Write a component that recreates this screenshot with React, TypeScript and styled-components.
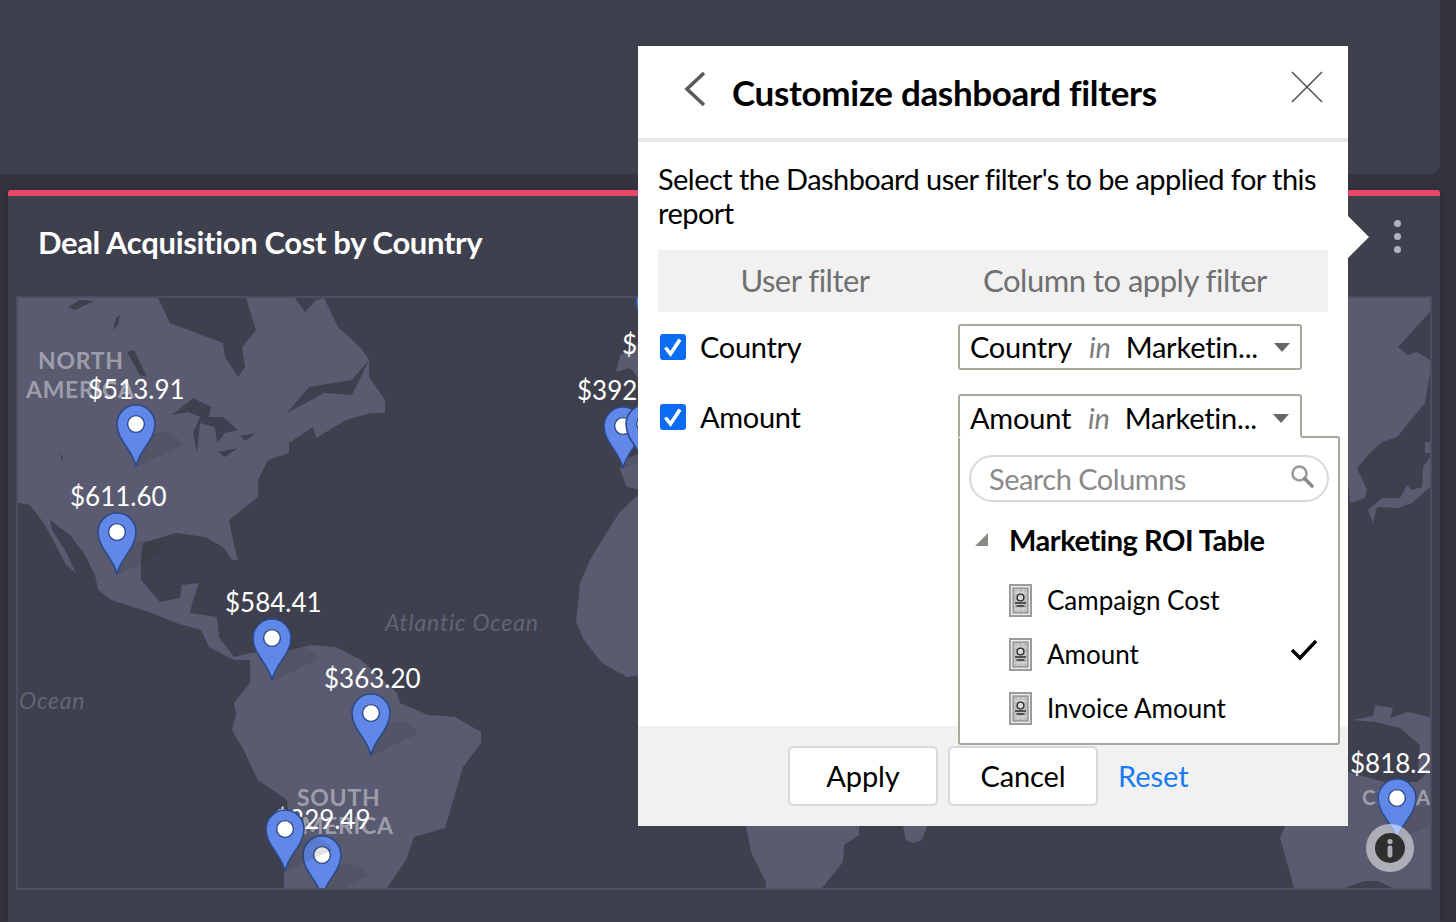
import * as React from "react";
import styled, { createGlobalStyle } from "styled-components";

const GlobalStyle = createGlobalStyle`
  html, body {
    margin: 0;
    padding: 0;
    background: #333440;
    font-family: "Lato", "Liberation Sans", sans-serif;
  }
`;

const Page = styled.div`
  position: relative;
  width: 1456px;
  height: 922px;
  overflow: hidden;
  display: flex;
  flex-direction: column;
  gap: 16px;
`;

const TopCard = styled.div`
  flex: none;
  width: 1440px;
  height: 174px;
  background: #3e404d;
  border-bottom-right-radius: 10px;
`;

const Widget = styled.section`
  flex: 1;
  margin: 0 16px 0 8px;
  background: #3e404d;
  border-top: 6px solid #e8476a;
  border-top-right-radius: 3px;
  border-top-left-radius: 3px;
  padding: 0 8px;
  box-shadow: 0 0 8px rgba(0, 0, 0, 0.18);
`;

const WidgetHeader = styled.header`
  height: 100px;
  display: flex;
  align-items: center;
  justify-content: space-between;
  padding: 0 31px 18px 22px;
  box-sizing: border-box;
`;

const WidgetTitle = styled.h2`
  margin: 10px 0 0;
  font-size: 31px;
  font-weight: 700;
  letter-spacing: -0.35px;
  color: #fff;
`;

const Kebab = styled.div`
  display: flex;
  flex-direction: column;
  gap: 6px;
  margin-top: -2px;
`;

const KebabDot = styled.span`
  width: 7px;
  height: 7px;
  border-radius: 50%;
  background: #b0b1bc;
`;

const MapBox = styled.div`
  position: relative;
  box-sizing: border-box;
  height: 594px;
  border: 2px solid #4b4d60;
  overflow: hidden;
  background: #3e404d;
`;

const LandSvg = styled.svg`
  position: absolute;
  inset: 0;
  display: block;
`;

const Region = styled.span<{ $x: number; $y: number; $size?: number }>`
  position: absolute;
  left: ${(p) => p.$x}px;
  top: ${(p) => p.$y}px;
  font-size: ${(p) => p.$size ?? 23}px;
  line-height: 28px;
  font-weight: 700;
  letter-spacing: 0.7px;
  color: rgba(255, 255, 255, 0.42);
  white-space: nowrap;
`;

const Sea = styled.span<{ $x: number; $y: number }>`
  position: absolute;
  left: ${(p) => p.$x}px;
  top: ${(p) => p.$y}px;
  font-size: 23px;
  line-height: 28px;
  font-style: italic;
  letter-spacing: 0.8px;
  color: #636473;
  white-space: nowrap;
`;

const Amount = styled.span<{ $x: number; $y: number }>`
  position: absolute;
  left: ${(p) => p.$x}px;
  top: ${(p) => p.$y}px;
  font-size: 26px;
  line-height: 32px;
  color: #fff;
  white-space: nowrap;
`;

const PinSvg = styled.svg<{ $x: number; $y: number }>`
  position: absolute;
  left: ${(p) => p.$x - 20}px;
  top: ${(p) => p.$y}px;
  overflow: visible;
`;

const InfoBadge = styled.div`
  position: absolute;
  left: 1348px;
  top: 526px;
  width: 48px;
  height: 48px;
  border-radius: 50%;
  background: rgba(255, 255, 255, 0.51);
  display: flex;
  align-items: center;
  justify-content: center;
`;

const Modal = styled.div`
  position: absolute;
  left: 638px;
  top: 46px;
  width: 710px;
  height: 780px;
  background: #fff;
  display: flex;
  flex-direction: column;

  &::after {
    content: "";
    position: absolute;
    left: 100%;
    top: 170px;
    border-left: 21px solid #fff;
    border-top: 21px solid transparent;
    border-bottom: 21px solid transparent;
  }
`;

const ModalHeader = styled.header`
  flex: none;
  height: 96px;
  box-sizing: border-box;
  border-bottom: 4px solid #e8e8e8;
  display: flex;
  align-items: center;
  padding: 0 25px 0 45px;
`;

const ModalTitle = styled.h1`
  flex: 1;
  margin: 0 0 0 25px;
  font-size: 35px;
  font-weight: 700;
  letter-spacing: -0.33px;
  color: #000;
`;

const HeaderIcon = styled.svg<{ $lift: number }>`
  display: block;
  flex: none;
  margin-bottom: ${(p) => p.$lift}px;
`;

const ModalBody = styled.div`
  flex: 1;
  padding: 20px 20px 0;
  display: flex;
  flex-direction: column;
`;

const Intro = styled.p`
  margin: 0;
  font-size: 29px;
  line-height: 34px;
  color: #000;
  letter-spacing: -0.55px;
`;

const TableHead = styled.div`
  margin-top: 20px;
  height: 62px;
  box-sizing: border-box;
  padding-bottom: 2px;
  background: #f1f1f1;
  display: grid;
  grid-template-columns: 294px 346px;
  align-items: center;
  text-align: center;
  font-size: 31px;
  color: #707070;
  letter-spacing: -0.5px;
`;

const FilterRows = styled.div`
  position: relative;
  display: flex;
  flex-direction: column;
  gap: 24px;
  padding-top: 12px;
`;

const FilterRow = styled.div`
  height: 46px;
  display: grid;
  grid-template-columns: 300px 344px;
  align-items: center;
`;

const CheckLabel = styled.label`
  display: flex;
  align-items: center;
  gap: 14px;
  padding-left: 2px;
  font-size: 29px;
  color: #000;
  letter-spacing: -0.3px;
`;

const CheckBox = styled.span`
  width: 26px;
  height: 26px;
  border-radius: 3px;
  background: #0a6cf0;
  display: flex;
  align-items: center;
  justify-content: center;
`;

const CheckText = styled.span`
  margin-bottom: 2px;
`;

const Select = styled.div<{ $open?: boolean }>`
  position: relative;
  z-index: 2;
  box-sizing: border-box;
  height: ${(p) => (p.$open ? "44px" : "46px")};
  align-self: start;
  display: flex;
  align-items: center;
  gap: 17px;
  padding: ${(p) => (p.$open ? "2px 12px 0 10px" : "0 12px 2px 10px")};
  background: #fff;
  border: 2px solid #a8a89c;
  border-bottom: ${(p) => (p.$open ? "2px solid #fff" : "2px solid #a8a89c")};
  border-radius: ${(p) => (p.$open ? "3px 3px 0 0" : "3px")};
  font-size: 29px;
  color: #000;
  letter-spacing: -0.22px;
  white-space: nowrap;
`;

const InWord = styled.em`
  color: #7d7d7d;
  margin-right: -2px;
`;

const Caret = styled.span`
  margin: 2px 0 0 auto;
  border-top: 9px solid #666;
  border-left: 8px solid transparent;
  border-right: 8px solid transparent;
  position: relative;
  left: -1px;
`;

const Dropdown = styled.div`
  position: absolute;
  z-index: 1;
  left: 300px;
  top: 124px;
  width: 382px;
  height: 309px;
  box-sizing: border-box;
  padding: 17px 9px 0;
  background: #fff;
  border: 2px solid #a8a89c;
  border-radius: 3px;
`;

const SearchBox = styled.div`
  height: 47px;
  box-sizing: border-box;
  border: 2px solid #d8d8d8;
  border-radius: 24px;
  display: flex;
  align-items: center;
  justify-content: space-between;
  padding: 0 13px 0 18px;
  font-size: 29px;
  letter-spacing: -0.5px;
  color: #8a8a8a;
`;

const SearchIcon = styled.svg`
  margin-top: -6px;
`;

const TreeHead = styled.div`
  display: flex;
  align-items: center;
  height: 34px;
  margin: 20px 0 17px;
  font-size: 29px;
  font-weight: 700;
  color: #000;
  letter-spacing: -0.45px;
`;

const TreeToggle = styled.span`
  width: 0;
  height: 0;
  margin: 0 21px 0 6px;
  border-bottom: 13px solid #8c8c84;
  border-left: 13px solid transparent;
`;

const ColumnItem = styled.div`
  height: 54px;
  display: flex;
  align-items: center;
  gap: 15px;
  padding: 0 11px 0 40px;
  font-size: 26px;
  color: #000;
`;

const ColumnName = styled.span`
  flex: 1;
`;

const SelectedMark = styled.svg`
  margin-bottom: 9px;
`;

const ModalFooter = styled.footer`
  flex: none;
  height: 100px;
  box-sizing: border-box;
  background: #f1f1f1;
  display: flex;
  align-items: center;
  gap: 10px;
  padding: 0 0 0 150px;
`;

const FooterButton = styled.button`
  width: 150px;
  height: 60px;
  padding: 0 0 2px;
  background: #fff;
  border: 2px solid #d8d8d8;
  border-radius: 6px;
  font: inherit;
  font-size: 29px;
  letter-spacing: -0.1px;
  color: #000;
`;

const ResetLink = styled.a`
  margin: 0 0 2px 10px;
  font-size: 29px;
  color: #1a7cf5;
`;

const LAND: string[] = [
  // north and central america
  "18,298 158,298 170,323 223,343 225,357 238,377 245,367 242,347 256,330 246,298 295,298 305,312 316,300 324,298 338,327 361,348 369,360 369,377 385,400 385,413 371,413 346,420 316,438 313,427 289,443 289,453 268,460 258,480 258,497 229,520 234,545 238,560 232,560 223,547 205,537 176,533 143,543 141,560 141,580 160,602 180,598 182,585 199,583 193,600 190,613 217,617 219,637 234,657 250,653 262,655 250,660 234,660 209,647 201,630 176,623 152,613 111,600 98,590 95,575 85,555 70,535 50,520 52,530 65,550 76,573 66,565 60,553 45,525 30,505 18,503",
  // south america
  "250,653 290,650 311,645 336,647 361,660 397,693 400,703 428,715 455,717 481,732 481,743 463,767 445,828 414,837 406,860 387,888 284,888 284,873 290,830 287,800 258,780 242,747 232,730 236,715 234,703 250,683 250,660",
  // europe
  "616,372 620,355 635,347 640,340 640,380 630,368",
  "620,470 623,460 640,453 640,490 627,487",
  // africa
  "640,493 619,513 594,553 590,560 580,583 576,622 584,640 602,663 627,677 640,675",
  "746,826 859,826 859,835 844,845 843,862 822,888 766,888 766,882 751,852",
  "903,826 927,826 922,840 913,843 906,840",
  // asia
  "1340,298 1430,298 1430,312 1398,347 1408,355 1417,352 1430,360 1430,373 1425,403 1397,437 1382,442 1370,453 1357,468 1367,490 1365,498 1350,503 1348,480 1340,480",
  "1425,442 1430,442 1430,453 1425,453",
  "1430,457 1423,467 1422,487 1412,490 1407,485 1400,498 1382,498 1368,510 1373,523 1377,507 1398,508 1412,503 1430,487",
  "1375,705 1393,708 1390,718 1408,712 1430,717 1430,775 1418,770 1420,745 1400,728 1375,722 1352,720 1373,716",
  // oceania
  "1285,826 1340,800 1348,772 1385,782 1417,782 1430,770 1430,888 1392,888 1378,881 1365,881 1344,888 1294,888 1283,848 1280,838",
];

const WATER: string[] = [
  "68,307 80,300 94,301 75,310",
  "113,330 116,318 120,315 118,325",
  "127,352 134,350 147,377 140,375",
  "172,415 193,398 211,407 209,417 223,417 238,430 225,433 217,443 215,427 200,423 197,453 193,433 200,417 188,412",
  "218,452 238,448 225,457",
  "240,436 256,433 245,441",
  "287,413 309,387 352,380 369,360 352,395 324,393",
  "60,453 63,458 62,462",
];

const PINS = [
  { x: 118, y: 106 },
  { x: 99, y: 214 },
  { x: 254, y: 320 },
  { x: 353, y: 395 },
  { x: 304, y: 537 },
  { x: 267, y: 511 },
  { x: 605, y: 108 },
  { x: 627, y: 106 },
  { x: 637, y: -16 },
  { x: 1379, y: 480 },
];

const AMOUNTS = [
  { x: 70, y: 75, text: "$513.91" },
  { x: 52, y: 182, text: "$611.60" },
  { x: 207, y: 288, text: "$584.41" },
  { x: 306, y: 364, text: "$363.20" },
  { x: 256, y: 505, text: "$329.49" },
  { x: 559, y: 76, text: "$392" },
  { x: 604, y: 30, text: "$" },
  { x: 1332, y: 449, text: "$818.2" },
];

const Pin = ({ x, y }: { x: number; y: number }) => (
  <PinSvg $x={x} $y={y} width="40" height="64" viewBox="0 0 40 64">
    <path d="M20 63 L67 41 C60 28 44 25 34 32 Z" fill="rgba(40,41,52,0.14)" />
    <path
      d="M20 63 C18 47 1 37 1 20 A19 19 0 0 1 39 20 C39 37 22 47 20 63 Z"
      fill="#6188e8"
      stroke="#2c4a86"
      strokeWidth="1.6"
    />
    <circle cx="20" cy="20" r="8.4" fill="#fff" stroke="#2c4a86" strokeWidth="1.4" />
  </PinSvg>
);

const ColumnIcon = () => (
  <svg width="23" height="33" viewBox="0 0 23 33">
    <rect x="1" y="1" width="21" height="31" fill="#ececec" stroke="#9c9c9c" strokeWidth="2" />
    <rect x="4" y="4" width="15" height="25" fill="#bdbdbd" stroke="#7e7e7e" />
    <path d="M9 5 V28 M14 5 V28 M5 9 H18 M5 25 H18" stroke="#d8d8d8" />
    <circle cx="11.5" cy="13.5" r="3.4" fill="#d8d8d8" stroke="#2c2c2c" strokeWidth="1.4" />
    <path d="M6 19 H17 M7.5 22 H15.5" stroke="#2c2c2c" strokeWidth="1.5" />
  </svg>
);

const Check = () => (
  <svg width="22" height="22" viewBox="0 0 22 22">
    <path d="M3.5 11.5 L8.5 18 L18 3.5" fill="none" stroke="#fff" strokeWidth="3.6" />
  </svg>
);

const filters = [
  { name: "Country", open: false },
  { name: "Amount", open: true },
];

const columns = ["Campaign Cost", "Amount", "Invoice Amount"];

export default function App() {
  return (
    <Page>
      <GlobalStyle />
      <TopCard />
      <Widget>
        <WidgetHeader>
          <WidgetTitle>Deal Acquisition Cost by Country</WidgetTitle>
          <Kebab>
            <KebabDot />
            <KebabDot />
            <KebabDot />
          </Kebab>
        </WidgetHeader>
        <MapBox>
          <LandSvg width="1412" height="590" viewBox="18 298 1412 590">
            {LAND.map((points) => (
              <polygon key={points} points={points} fill="#5a5b70" />
            ))}
            {WATER.map((points) => (
              <polygon key={points} points={points} fill="#3e404d" />
            ))}
          </LandSvg>
          <Region $x={20} $y={48}>NORTH</Region>
          <Region $x={8} $y={77}>AMERICA</Region>
          <Region $x={279} $y={485}>SOUTH</Region>
          <Region $x={267} $y={513}>AMERICA</Region>
          <Region $x={1344} $y={485} $size={20.5}>CHINA</Region>
          <Sea $x={367} $y={310}>Atlantic Ocean</Sea>
          <Sea $x={1} $y={388}>Ocean</Sea>
          {AMOUNTS.map((a) => (
            <Amount key={a.text} $x={a.x} $y={a.y}>{a.text}</Amount>
          ))}
          {PINS.map((p) => (
            <Pin key={`${p.x}-${p.y}`} x={p.x} y={p.y} />
          ))}
          <InfoBadge>
            <svg width="30" height="30" viewBox="0 0 30 30">
              <circle cx="15" cy="15" r="15" fill="#2f2f2f" />
              <circle cx="15" cy="8.5" r="2.6" fill="#adadb6" />
              <rect x="12.6" y="12.5" width="4.8" height="12" rx="2.2" fill="#adadb6" />
            </svg>
          </InfoBadge>
        </MapBox>
      </Widget>

      <Modal>
        <ModalHeader>
          <HeaderIcon $lift={7} width="24" height="36" viewBox="0 0 24 36">
            <path d="M21 2 L4 18 L21 34" fill="none" stroke="#5a5a5a" strokeWidth="3.6" />
          </HeaderIcon>
          <ModalTitle>Customize dashboard filters</ModalTitle>
          <HeaderIcon $lift={10} width="32" height="32" viewBox="0 0 32 32">
            <path d="M1 1 L31 31 M31 1 L1 31" stroke="#555" strokeWidth="1.6" />
          </HeaderIcon>
        </ModalHeader>
        <ModalBody>
          <Intro>Select the Dashboard user filter's to be applied for this report</Intro>
          <TableHead>
            <span>User filter</span>
            <span>Column to apply filter</span>
          </TableHead>
          <FilterRows>
            {filters.map((f) => (
              <FilterRow key={f.name}>
                <CheckLabel>
                  <CheckBox>
                    <Check />
                  </CheckBox>
                  <CheckText>{f.name}</CheckText>
                </CheckLabel>
                <Select $open={f.open}>
                  <span>{f.name}</span>
                  <InWord>in</InWord>
                  <span>Marketin...</span>
                  <Caret />
                </Select>
              </FilterRow>
            ))}
            <Dropdown>
              <SearchBox>
                <span>Search Columns</span>
                <SearchIcon width="24" height="24" viewBox="0 0 24 24">
                  <circle cx="9.5" cy="9.5" r="7" fill="none" stroke="#9a9a9a" strokeWidth="2.6" />
                  <path d="M14.5 14.5 L22 22" stroke="#8a8a8a" strokeWidth="3.6" strokeLinecap="round" />
                </SearchIcon>
              </SearchBox>
              <TreeHead>
                <TreeToggle />
                Marketing ROI Table
              </TreeHead>
              {columns.map((c) => (
                <ColumnItem key={c}>
                  <ColumnIcon />
                  <ColumnName>{c}</ColumnName>
                  {c === "Amount" && (
                    <SelectedMark width="28" height="22" viewBox="0 0 28 22">
                      <path d="M2 11 L10 19 L26 2" fill="none" stroke="#000" strokeWidth="3.4" />
                    </SelectedMark>
                  )}
                </ColumnItem>
              ))}
            </Dropdown>
          </FilterRows>
        </ModalBody>
        <ModalFooter>
          <FooterButton>Apply</FooterButton>
          <FooterButton>Cancel</FooterButton>
          <ResetLink>Reset</ResetLink>
        </ModalFooter>
      </Modal>
    </Page>
  );
}
